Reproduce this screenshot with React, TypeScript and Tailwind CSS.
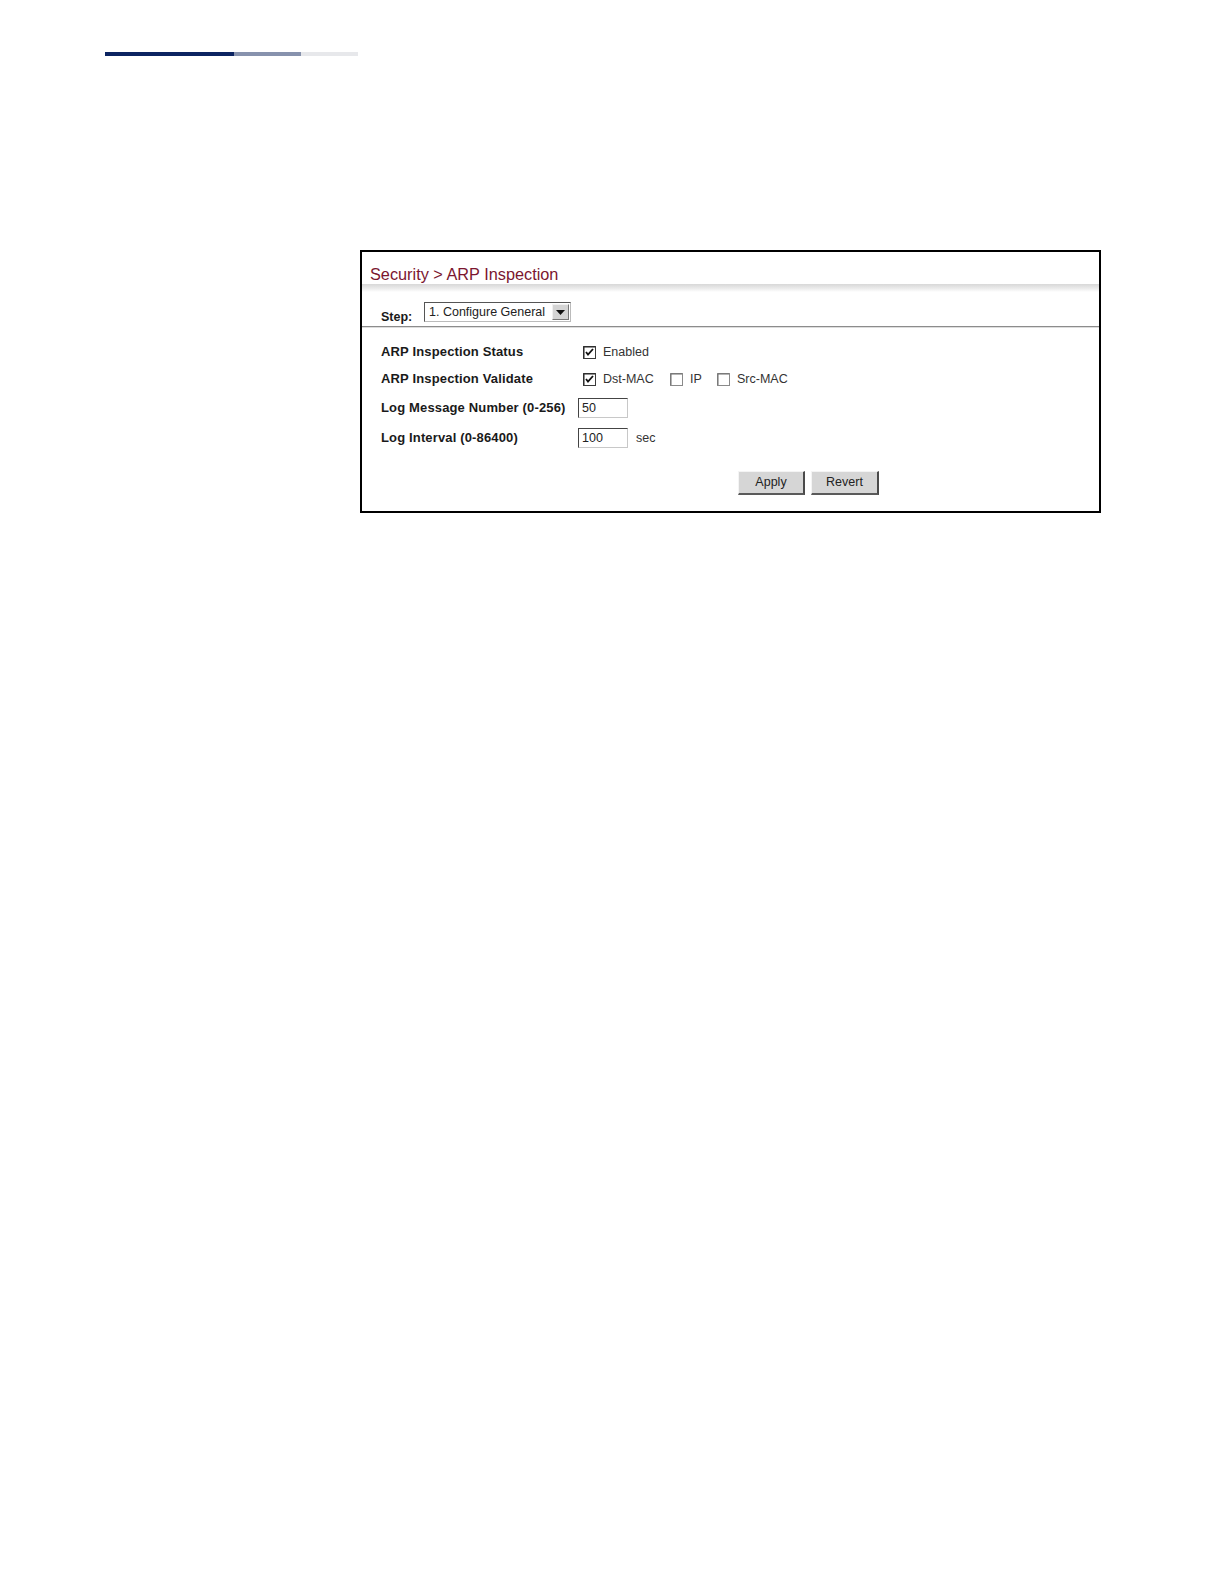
import React from "react";

function Check({ checked }: { checked: boolean }) {
  return (
    <svg width="13" height="13" viewBox="0 0 13 13" className="shrink-0">
      <rect x="0.5" y="0.5" width="12" height="12" fill="#fff" stroke={checked ? "#3a3a3a" : "#8a8a8a"} />
      <path d="M1 12V1h11" fill="none" stroke={checked ? "#222" : "#6a6a6a"} strokeWidth="1" />
      {checked && <path d="M3 6l2 2.5L10 3" fill="none" stroke="#111" strokeWidth="1.8" />}
    </svg>
  );
}

function Btn({ children, w }: { children: React.ReactNode; w: string }) {
  return (
    <div
      className={`${w} h-[24px] flex items-center justify-center bg-[#d6d6d6] border-t border-l border-t-[#f4f4f4] border-l-[#f4f4f4] border-r-2 border-b-2 border-r-[#4a4a4a] border-b-[#5a5a5a] text-[12.5px] text-[#222]`}
    >
      {children}
    </div>
  );
}

export default function App() {
  const font = { fontFamily: '"Liberation Sans", Arial, sans-serif' };
  const label = "w-[197px] text-[13px] tracking-[0.15px] font-bold text-[#1a1a1a]";
  return (
    <div className="bg-white pb-[40px]" style={font}>
      <div className="pt-[52px] pl-[105px] flex">
        <div className="w-[129px] h-[4px] bg-[#0c2461]" />
        <div className="w-[67px] h-[4px] bg-[#8792ad]" />
        <div className="w-[57px] h-[4px] bg-[#e7e8eb]" />
      </div>

      <div className="mt-[194px] ml-[360px] w-[741px] h-[263px] border-2 border-black flex flex-col">
        <div className="h-[32px] pt-[12px] pl-[8px] text-[16.3px] leading-[20px] text-[#7b1630]">
          Security &gt; ARP Inspection
        </div>
        <div className="h-[8px] bg-gradient-to-b from-[#d8d8d8] via-[#e9e9e9] to-white" />
        <div className="h-[34px] flex items-start pl-[19px] pt-[10px]">
          <div className="text-[12.5px] font-bold text-[#1a1a1a] mt-[6px] w-[43px]">Step:</div>
          <div className="w-[147px] h-[20px] border border-[#555] border-b-[#bbb] border-r-[#bbb] bg-white flex items-center">
            <span className="pl-[4px] text-[12.5px] text-[#222] flex-1">1. Configure General</span>
            <div className="w-[17px] h-[16px] mr-[1px] bg-[#d4d4d4] border border-[#f0f0f0] border-r-[#777] border-b-[#777] flex items-center justify-center">
              <svg width="9" height="5" viewBox="0 0 9 5">
                <path d="M0 0h9L4.5 5z" fill="#111" />
              </svg>
            </div>
          </div>
        </div>
        <div className="h-[1px] bg-[#8c8c8c]" />
        <div className="h-[1px] bg-[#dddddd]" />

        <div className="pl-[19px] flex flex-col">
          <div className="mt-[12px] h-[24px] flex items-center">
            <div className={label}>ARP Inspection Status</div>
            <div className="ml-[5px] flex items-center">
              <Check checked />
              <span className="ml-[7px] text-[12.5px] text-[#333]">Enabled</span>
            </div>
          </div>
          <div className="mt-[3px] h-[24px] flex items-center">
            <div className={label}>ARP Inspection Validate</div>
            <div className="ml-[5px] flex items-center">
              <Check checked />
              <span className="ml-[7px] w-[67px] text-[12.5px] text-[#333]">Dst-MAC</span>
              <Check checked={false} />
              <span className="ml-[7px] w-[27px] text-[12.5px] text-[#333]">IP</span>
              <Check checked={false} />
              <span className="ml-[7px] text-[12.5px] text-[#333]">Src-MAC</span>
            </div>
          </div>
          <div className="mt-[7px] h-[20px] flex items-center">
            <div className={label}>Log Message Number (0-256)</div>
            <div className="w-[50px] h-[20px] border border-[#444] border-r-[#c8c8c8] border-b-[#c8c8c8] bg-white flex items-center pl-[3px] text-[12.5px] text-[#222]">
              50
            </div>
          </div>
          <div className="mt-[10px] h-[20px] flex items-center">
            <div className={label}>Log Interval (0-86400)</div>
            <div className="w-[50px] h-[20px] border border-[#444] border-r-[#c8c8c8] border-b-[#c8c8c8] bg-white flex items-center pl-[3px] text-[12.5px] text-[#222]">
              100
            </div>
            <span className="ml-[8px] text-[12.5px] text-[#333]">sec</span>
          </div>
        </div>

        <div className="mt-[23px] ml-[376px] flex gap-[6px]">
          <Btn w="w-[67px]">Apply</Btn>
          <Btn w="w-[68px]">Revert</Btn>
        </div>
      </div>
    </div>
  );
}
